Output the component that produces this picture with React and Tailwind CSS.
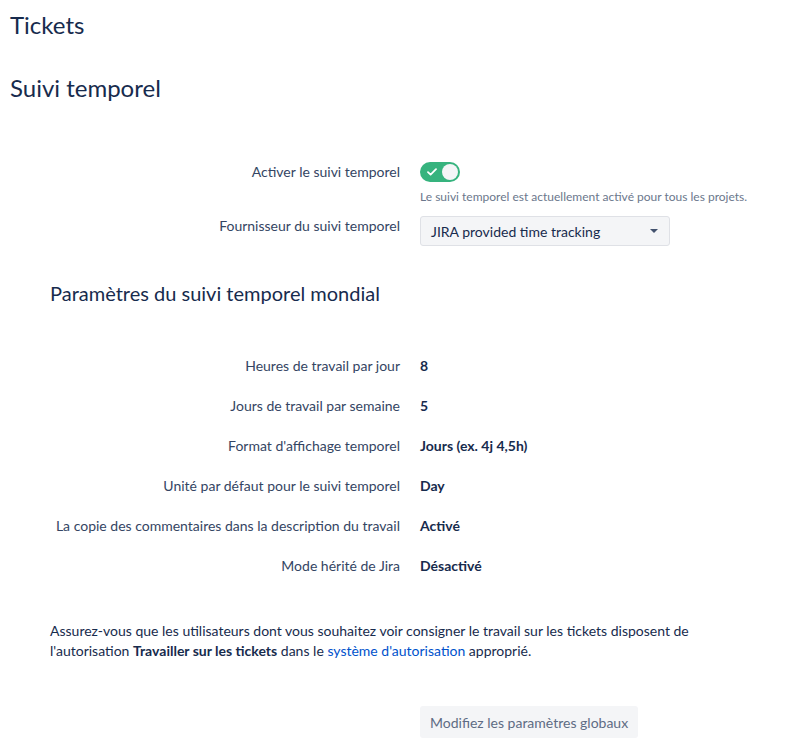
const rows = [
  ["Heures de travail par jour", "8"],
  ["Jours de travail par semaine", "5"],
  ["Format d'affichage temporel", "Jours (ex. 4j 4,5h)"],
  ["Unité par défaut pour le suivi temporel", "Day"],
  ["La copie des commentaires dans la description du travail", "Activé"],
  ["Mode hérité de Jira", "Désactivé"],
];

function Toggle() {
  return (
    <div className="flex h-5 w-10 items-center justify-between rounded-full bg-[#36b37e] pl-[7px] pr-[2px]">
      <svg width="10" height="8" viewBox="0 0 10 8" fill="none">
        <path d="M1 4.2 3.6 6.6 9 1.2" stroke="white" strokeWidth="1.8" strokeLinecap="round" strokeLinejoin="round" />
      </svg>
      <span className="h-4 w-4 rounded-full bg-[#f4f5f7]" />
    </div>
  );
}

export default function App() {
  return (
    <div className="min-h-[746px] bg-white pl-[10px] pt-[9px] font-['Lato',sans-serif] text-[14px] text-[#172b4d]">
      <h1 className="text-2xl leading-8">Tickets</h1>
      <h2 className="mt-[31px] text-2xl leading-8">Suivi temporel</h2>

      <div className="ml-[-10px] mt-[58px] grid grid-cols-[400px_1fr] gap-x-5">
        <div className="text-right leading-5 text-[#344563]">Activer le suivi temporel</div>
        <div>
          <Toggle />
          <p className="mt-[7px] text-xs leading-4 text-[#6b778c]">Le suivi temporel est actuellement activé pour tous les projets.</p>
        </div>

        <div className="mt-[11px] text-right leading-5 text-[#344563]">Fournisseur du suivi temporel</div>
        <div className="mt-[11px]">
          <div className="flex h-[30px] w-[250px] items-center justify-between rounded-[3px] border border-[#dfe1e6] bg-[#f4f5f7] pl-[10px] pr-[11px]">
            <span>JIRA provided time tracking</span>
            <svg width="8" height="4" viewBox="0 0 8 4">
              <path d="M0 0h8L4 4z" fill="#42526e" />
            </svg>
          </div>
        </div>
      </div>

      <h3 className="ml-10 mt-[33px] text-xl leading-7">Paramètres du suivi temporel mondial</h3>

      <div className="ml-[-10px] mt-[49px] grid grid-cols-[400px_1fr] gap-x-5 gap-y-5 leading-5">
        {rows.map(([label, value]) => (
          <div className="contents" key={label}>
            <div className="text-right text-[#344563]">{label}</div>
            <div className="font-bold">{value}</div>
          </div>
        ))}
      </div>

      <p className="ml-10 mt-[45px] leading-5">
        Assurez-vous que les utilisateurs dont vous souhaitez voir consigner le travail sur les tickets disposent de
        <br />
        l'autorisation <strong>Travailler sur les tickets</strong> dans le{" "}
        <a className="text-[#0052cc]" href="#">système d'autorisation</a> approprié.
      </p>

      <div className="ml-[410px] mt-[45px]">
        <button className="h-8 rounded-[3px] bg-[#f4f5f7] px-[10px] text-[#5e6c84]" type="button">
          Modifiez les paramètres globaux
        </button>
      </div>
    </div>
  );
}
